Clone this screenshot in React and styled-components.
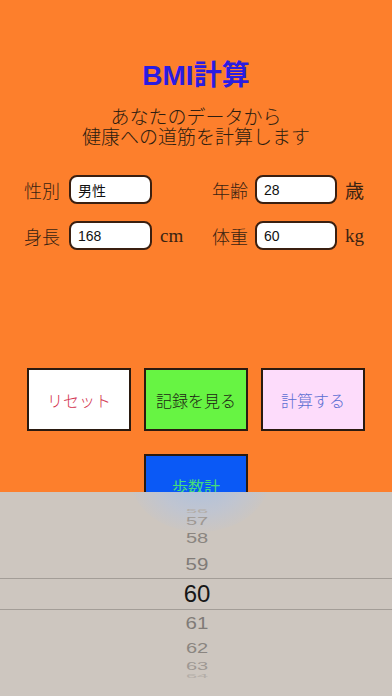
import styled, { createGlobalStyle } from "styled-components";

const GlobalStyle = createGlobalStyle`
  html, body {
    margin: 0;
    padding: 0;
    background: #fd7f2c;
  }
  #root {
    height: 696px;
    overflow: hidden;
  }
`;

const fields = [
  [
    { label: "性別", value: "男性", unit: "" },
    { label: "年齢", value: "28", unit: "歳" },
  ],
  [
    { label: "身長", value: "168", unit: "cm" },
    { label: "体重", value: "60", unit: "kg" },
  ],
];

const buttons = [
  { text: "リセット", bg: "#ffffff", color: "#d2304c" },
  { text: "記録を見る", bg: "#67f443", color: "#1d2414" },
  { text: "計算する", bg: "#fddcfb", color: "#5a6ed2" },
];

const wheel = [
  { n: 56, h: 8, size: 20, sy: 0.25, color: "#b4aea8" },
  { n: 57, h: 11, size: 20, sy: 0.5, color: "#9e9893" },
  { n: 58, h: 24, size: 20, sy: 0.72, color: "#8a8580" },
  { n: 59, h: 28, size: 20.5, sy: 0.85, color: "#807b77" },
  { n: 60, h: 32, size: 24, sy: 1, color: "#161616", active: true },
  { n: 61, h: 26, size: 20.5, sy: 0.85, color: "#807b77" },
  { n: 62, h: 23, size: 20, sy: 0.72, color: "#8a8580" },
  { n: 63, h: 13, size: 20, sy: 0.5, color: "#9e9893" },
  { n: 64, h: 8, size: 20, sy: 0.25, color: "#b4aea8" },
];

export default function App() {
  return (
    <>
      <GlobalStyle />
      <Screen>
        <Title>BMI計算</Title>
        <Subtitle>
          あなたのデータから
          <br />
          健康への道筋を計算します
        </Subtitle>
        <Form>
          {fields.map((row, i) => (
            <FormRow key={i}>
              {row.map((f, j) => (
                <Group key={f.label}>
                  <Label narrow={j === 1}>{f.label}</Label>
                  <Input narrow={j === 1}>{f.value}</Input>
                  <Unit>{f.unit}</Unit>
                </Group>
              ))}
            </FormRow>
          ))}
        </Form>
        <ButtonRow>
          {buttons.map((b) => (
            <Button key={b.text} bg={b.bg} color={b.color}>
              {b.text}
            </Button>
          ))}
        </ButtonRow>
        <ButtonRow variant="single">
          <Button bg="#0a59f6" color="#45dc7c" variant="sans">
            歩数計
          </Button>
        </ButtonRow>
      </Screen>
      <Picker>
        <Glow />
        <Wheel>
          {wheel.map((w) => (
            <WheelRow key={w.n} h={w.h} active={w.active}>
              <WheelNum size={w.size} sy={w.sy} color={w.color}>
                {w.n}
              </WheelNum>
            </WheelRow>
          ))}
        </Wheel>
      </Picker>
    </>
  );
}

const Screen = styled.div`
  height: 696px;
  background: #fd7f2c;
  display: flex;
  flex-direction: column;
  align-items: center;
  padding-top: 57px;
  box-sizing: border-box;
`;

const Title = styled.h1`
  margin: 0;
  font-family: "Liberation Sans", "Noto Sans CJK JP", sans-serif;
  font-weight: 700;
  font-size: 28px;
  line-height: 38px;
  color: #2a1ce2;
`;

const Subtitle = styled.p`
  margin: 11px 0 0;
  font-family: "Noto Sans CJK JP", sans-serif;
  font-weight: 300;
  font-size: 19px;
  line-height: 20px;
  text-align: center;
  color: #2e1d10;
`;

const Form = styled.div`
  display: flex;
  flex-direction: column;
  gap: 17px;
  margin-top: 29px;
  width: 100%;
  padding-left: 24px;
  box-sizing: border-box;
`;

const FormRow = styled.div`
  display: flex;
`;

const Group = styled.div`
  display: flex;
  align-items: center;
  flex: 0 0 188px;
`;

const Label = styled.span`
  flex: 0 0 ${(p) => (p.narrow ? "43px" : "45px")};
  font-family: "Noto Sans CJK JP", sans-serif;
  font-weight: 300;
  font-size: 18px;
  color: #3a2312;
`;

const Input = styled.div`
  flex: 0 0 ${(p) => (p.narrow ? "82px" : "83px")};
  height: 29px;
  box-sizing: border-box;
  background: #ffffff;
  border: 2px solid #3a1f10;
  border-radius: 8px;
  padding-left: 7px;
  display: flex;
  align-items: center;
  font-family: "Liberation Sans", "Noto Sans CJK JP", sans-serif;
  font-size: 14px;
  color: #111;
`;

const Unit = styled.span`
  padding-left: 8px;
  font-family: "Liberation Serif", "Noto Sans CJK JP", serif;
  font-size: 19px;
  color: #3a2312;
`;

const ButtonRow = styled.div`
  display: flex;
  gap: 13px;
  margin-top: ${(p) => (p.variant === "single" ? "23px" : "118px")};
`;

const Button = styled.div`
  width: 104px;
  height: 63px;
  box-sizing: border-box;
  border: 2px solid #2a1a10;
  background: ${(p) => p.bg};
  color: ${(p) => p.color};
  display: flex;
  align-items: center;
  justify-content: center;
  font-family: "Noto Sans CJK JP", sans-serif;
  font-weight: ${(p) => (p.variant === "sans" ? 400 : 300)};
  font-size: 16px;
`;

const Picker = styled.div`
  position: fixed;
  left: 0;
  right: 0;
  top: 492px;
  bottom: 0;
  background: #cdc6bf;
  overflow: hidden;
`;

const Glow = styled.div`
  position: absolute;
  left: 130px;
  top: -70px;
  width: 140px;
  height: 110px;
  border-radius: 50%;
  background: radial-gradient(
    ellipse at center,
    rgba(160, 190, 235, 0.75) 0%,
    rgba(175, 195, 230, 0.45) 45%,
    rgba(205, 198, 191, 0) 75%
  );
`;

const Wheel = styled.div`
  position: relative;
  padding-top: 15px;
  display: flex;
  flex-direction: column;
`;

const WheelRow = styled.div`
  height: ${(p) => p.h}px;
  display: flex;
  align-items: center;
  justify-content: center;
  box-sizing: border-box;
  border-top: ${(p) => (p.active ? "1px solid #a39d97" : "none")};
  border-bottom: ${(p) => (p.active ? "1px solid #a39d97" : "none")};
`;

const WheelNum = styled.span`
  font-family: "Liberation Sans", sans-serif;
  font-size: ${(p) => p.size}px;
  line-height: 1;
  color: ${(p) => p.color};
  transform: scaleY(${(p) => p.sy});
  margin-left: 2px;
`;
